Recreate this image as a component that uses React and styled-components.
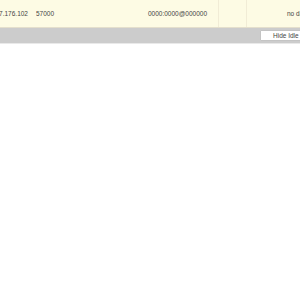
import styled, { createGlobalStyle } from 'styled-components'

const Global = createGlobalStyle`
  html, body {
    margin: 0;
    padding: 0;
    background: #ffffff;
    font-family: "Liberation Sans", Arial, sans-serif;
    overflow: hidden;
  }
`

const Page = styled.div`
  width: 300px;
  height: 300px;
  overflow: hidden;
  display: flex;
  flex-direction: column;
`

const Row = styled.div`
  display: flex;
  height: 27px;
  background: #fdfbe4;
  border-bottom: 1px solid #e4dfcc;
  font-size: 6.5px;
  color: #444444;
  white-space: nowrap;
`

const Cell = styled.div`
  flex: 0 0 ${p => p.w}px;
  display: flex;
  align-items: center;
  justify-content: ${p => p.align || 'flex-start'};
  padding: ${p => p.pad || '0'};
  box-sizing: border-box;
  overflow: hidden;
  border-right: ${p => (p.line ? '1px solid #f1ecd6' : 'none')};
`

const Toolbar = styled.div`
  height: 15px;
  background: #cccccc;
  border-bottom: 1px solid #e9e9e9;
  display: flex;
  align-items: center;
  justify-content: flex-end;
  overflow: hidden;
`

const Button = styled.button`
  height: 11px;
  width: 50px;
  margin-right: -10px;
  padding: 0 0 0 12px;
  background: #ffffff;
  border: 1px solid #c4c4c4;
  border-radius: 1px;
  font-family: "Liberation Sans", Arial, sans-serif;
  font-size: 6.5px;
  color: #444444;
  text-align: left;
  white-space: nowrap;
  overflow: hidden;
`

export default function App() {
  return (
    <Page>
      <Global />
      <Row>
        <Cell w={36} align="flex-end" pad="0 8px 0 0">10.27.176.102</Cell>
        <Cell w={74} pad="0 0 0 0">57000</Cell>
        <Cell w={109} align="flex-end" pad="0 11px 0 0" line>0000:0000@000000</Cell>
        <Cell w={28} line />
        <Cell w={60} pad="0 0 0 40px">no data</Cell>
      </Row>
      <Toolbar>
        <Button>Hide Idle</Button>
      </Toolbar>
    </Page>
  )
}
